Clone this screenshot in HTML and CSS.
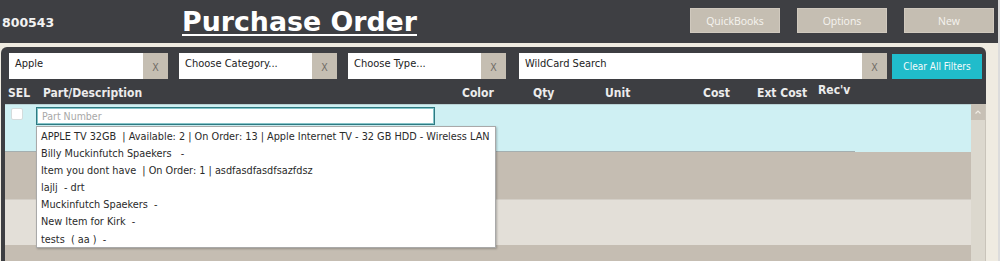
FILE: index.html
```html
<!DOCTYPE html>
<html>
<head>
<meta charset="utf-8">
<title>Purchase Order</title>
<link rel="stylesheet" href="styles.css">
</head>
<body>
<header class="topbar">
  <div class="po-num">800543</div>
  <h1 class="title">Purchase Order</h1>
  <div class="actions">
    <button class="btn">QuickBooks</button>
    <button class="btn">Options</button>
    <button class="btn">New</button>
  </div>
</header>
<main class="panel">
  <div class="filters">
    <div class="filter f1"><div class="filter-input w1">Apple</div><div class="filter-x">X</div></div>
    <div class="filter f2"><div class="filter-input w2">Choose Category...</div><div class="filter-x">X</div></div>
    <div class="filter f3"><div class="filter-input w2">Choose Type...</div><div class="filter-x">X</div></div>
    <div class="filter f4"><div class="filter-input w4">WildCard Search</div><div class="filter-x">X</div></div>
    <button class="clear">Clear All Filters</button>
  </div>
  <div class="cols">
    <div class="col c-sel">SEL</div>
    <div class="col c-part">Part/Description</div>
    <div class="col c-color">Color</div>
    <div class="col c-qty">Qty</div>
    <div class="col c-unit">Unit</div>
    <div class="col c-cost">Cost</div>
    <div class="col c-ext">Ext Cost</div>
    <div class="col c-recv">Rec'v</div>
  </div>
  <div class="grid">
    <div class="rows">
      <div class="row row-active">
        <div class="row-inner">
          <span class="check"></span>
          <div class="part-cell">
            <div class="part-input">Part Number</div>
            <ul class="suggest">
              <li>APPLE TV 32GB  | Available: 2 | On Order: 13 | Apple Internet TV - 32 GB HDD - Wireless LAN</li>
              <li>Billy Muckinfutch Spaekers   -</li>
              <li>Item you dont have  | On Order: 1 | asdfasdfasdfsazfdsz</li>
              <li>lajlj  - drt</li>
              <li>Muckinfutch Spaekers  -</li>
              <li>New Item for Kirk  -</li>
              <li>tests  ( aa )  -</li>
            </ul>
          </div>
        </div>
      </div>
      <div class="row row-dark r2"></div>
      <div class="row row-light r3"></div>
      <div class="row row-dark r4"></div>
    </div>
    <div class="scrollbar">
      <div class="scroll-up"><svg width="14" height="16" viewBox="0 0 14 16"><polyline points="4.5,9.5 7,7 9.5,9.5" fill="none" stroke="#efebe3" stroke-width="1.2"/></svg></div>
    </div>
  </div>
</main>
</body>
</html>
```
FILE: styles.css
```css
html, body {
  margin: 0;
  padding: 0;
}
body {
  width: 998px;
  height: 261px;
  overflow: hidden;
  background: #efebe1;
  border-right: 2px solid #dcdcdc;
  font-family: "DejaVu Sans Condensed", "DejaVu Sans", sans-serif;
}

/* ---------- top bar ---------- */
.topbar {
  display: flex;
  align-items: flex-start;
  height: 43px;
  background: #3e3f43;
}
.po-num {
  width: 180px;
  padding-left: 2px;
  margin-top: 17px;
  font: bold 12.5px/12.5px "DejaVu Sans", sans-serif;
  color: #f2f2f2;
}
.title {
  margin: 8px 0 0;
  font: bold 26.8px/27px "DejaVu Sans", sans-serif;
  color: #ffffff;
  text-decoration: underline;
  text-decoration-thickness: 2px;
  text-underline-offset: 3px;
}
.actions {
  display: flex;
  gap: 17px;
  margin: 8px 4px 0 auto;
}
.btn {
  width: 90px;
  height: 25px;
  padding: 0;
  background: #c5beb2;
  border: 1px solid #d0c9be;
  color: #f6f4f0;
  font: 10.5px "Open Sans", sans-serif;
}

/* ---------- panel ---------- */
.panel {
  display: flex;
  flex-direction: column;
  margin: 4px 0 0 1px;
  width: 985px;
  height: 214px;
  background: #3d3e42;
  border-radius: 6px 6px 0 0;
  overflow: hidden;
}
.filters {
  display: flex;
  align-items: flex-start;
  padding: 6px 4px 0 8px;
  height: 26px;
}
.filter {
  display: flex;
  height: 26px;
}
.f1, .f2 { margin-right: 11px; }
.f3 { margin-right: 13px; }
.f4 { margin-right: 5px; }
.filter-input {
  box-sizing: border-box;
  height: 26px;
  padding: 4px 6px 0;
  background: #ffffff;
  color: #222222;
  font-size: 11px;
  line-height: 13px;
}
.w1 { width: 134px; }
.w2 { width: 133px; }
.w4 { width: 343px; }
.filter-x {
  width: 25px;
  height: 26px;
  background: #c5beb2;
  color: #6f6b66;
  font-size: 10.5px;
  line-height: 28px;
  text-align: center;
}
.clear {
  width: 90px;
  height: 25px;
  margin-top: 1px;
  padding: 0;
  border: none;
  background: #20bccb;
  color: #f4fbfc;
  font: 10px "DejaVu Sans Condensed", "DejaVu Sans", sans-serif;
}

/* ---------- column headers ---------- */
.cols {
  display: flex;
  align-items: center;
  height: 25px;
  padding-left: 7px;
  color: #ececec;
  font-weight: bold;
  font-size: 12px;
}
.col { padding-top: 3px; }
.c-sel { width: 35px; }
.c-part { width: 419px; }
.c-color { width: 71px; }
.c-qty { width: 72px; }
.c-unit { width: 98px; }
.c-cost { width: 54px; }
.c-ext { width: 61px; }
.c-recv { padding-top: 0; padding-bottom: 3px; }

/* ---------- grid ---------- */
.grid {
  display: flex;
  flex: 1;
  margin-left: 4px;
}
.rows {
  flex: 1;
  display: flex;
  flex-direction: column;
}
.row { flex: none; }
.row-active {
  background: #cff0f3;
  border-top: 1px solid #b8d2d4;
}
.row-inner {
  display: flex;
  align-items: flex-start;
  box-sizing: border-box;
  width: 850px;
  height: 47px;
  padding: 2px 0 0 6px;
  border-bottom: 1px solid #a4afb0;
}
.check {
  box-sizing: border-box;
  width: 12px;
  height: 12px;
  margin: 1px 13px 0 0;
  background: #ffffff;
  border: 1px solid #d4dcdc;
  border-radius: 2px;
}
.part-cell { position: relative; }
.part-input {
  box-sizing: border-box;
  width: 399px;
  height: 18px;
  padding-left: 5px;
  background: #ffffff;
  border: 1px solid #2e7a82;
  box-shadow: inset 0 0 0 1px #86c4c9;
  color: #a8a8a8;
  font-size: 10.5px;
  line-height: 16px;
}
.suggest {
  position: absolute;
  top: 19px;
  left: 0;
  z-index: 5;
  box-sizing: border-box;
  width: 460px;
  height: 122px;
  margin: 0;
  padding: 1px 0 0 4px;
  list-style: none;
  background: #ffffff;
  border: 1px solid #a9a9a9;
  box-shadow: 1px 1px 2px rgba(0,0,0,0.25);
  color: #2a2a2a;
  font-size: 10.8px;
  line-height: 17.1px;
}
.suggest li { white-space: pre; }
.row-dark { background: #c5bdb2; }
.row-light { background: #e3dfd8; border-top: 1px solid #d3cec6; }
.r2 { height: 47px; }
.r3 { height: 45px; }
.r4 { flex: 1; }

.scrollbar {
  width: 14px;
  background: #dcd8ce;
  border-right: 1px solid #c9c4ba;
}
.scroll-up {
  height: 16px;
  background: #c7c0b5;
}
.scroll-up svg { display: block; }
```
